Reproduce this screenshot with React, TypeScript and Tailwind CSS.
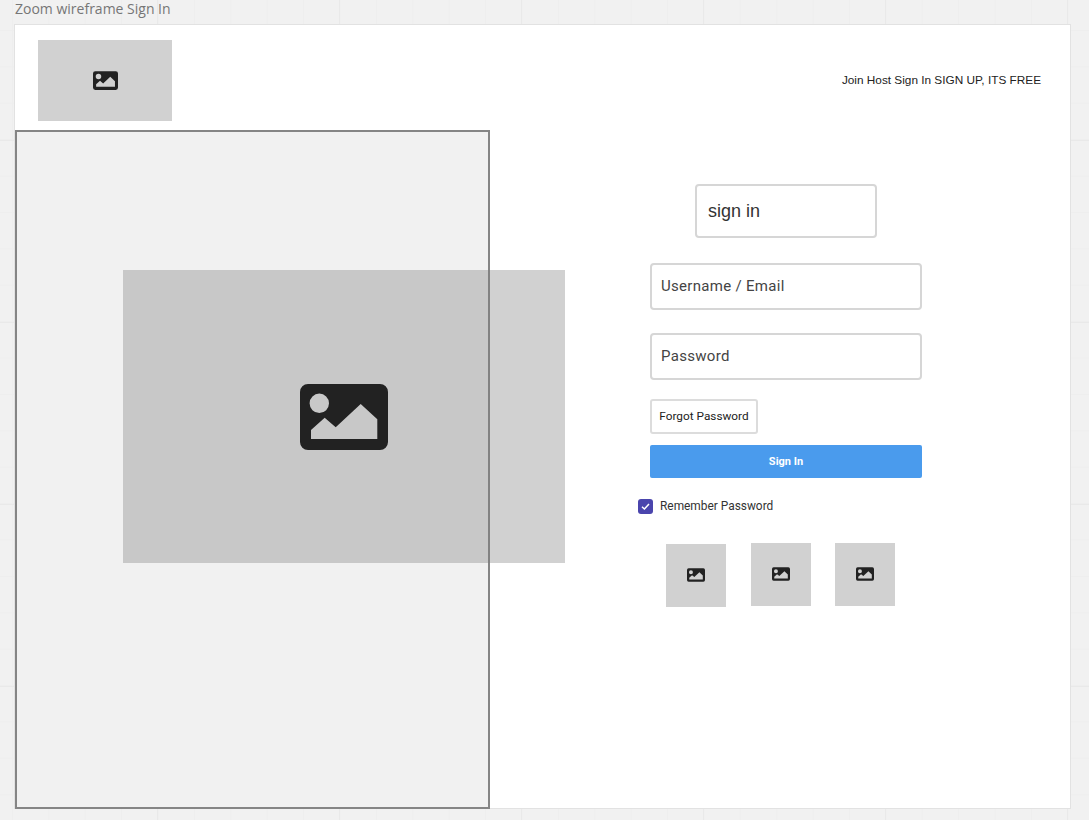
const roboto = "font-['Roboto','Liberation_Sans',sans-serif]";

// wireframe placeholder glyph
function ImageIcon({ className }: { className: string }) {
  return (
    <svg viewBox="0 0 88 66" className={className} aria-hidden="true">
      <path
        fill="#222222"
        fillRule="evenodd"
        d="M8 0H80A8 8 0 0 1 88 8V58A8 8 0 0 1 80 66H8A8 8 0 0 1 0 58V8A8 8 0 0 1 8 0ZM19.3 9.6A9.7 9.7 0 1 0 19.3 29A9.7 9.7 0 1 0 19.3 9.6ZM11 55H77.3V35.3L60.7 20L35.7 43.3L24.7 33.7L11 46Z"
      />
    </svg>
  );
}

function Thumb({ offset }: { offset: string }) {
  return (
    <div className={`flex h-[63px] w-[60px] items-center justify-center bg-[#d1d1d1] ${offset}`}>
      <ImageIcon className="h-[14px] w-[18px]" />
    </div>
  );
}

export default function App() {
  return (
    <div className="h-[820px] w-[1089px] overflow-hidden bg-[#f1f1f1] bg-[linear-gradient(#e9e9e9_1px,transparent_1px),linear-gradient(90deg,#e9e9e9_1px,transparent_1px),linear-gradient(#eeeeee_1px,transparent_1px),linear-gradient(90deg,#eeeeee_1px,transparent_1px)] bg-[size:182px_182px,182px_182px,36.4px_36.4px,36.4px_36.4px] bg-[position:157px_140px,157px_140px,12px_30px,12px_30px] pl-[14px]">
      <div className="h-[24px] pl-[1px] font-['Open_Sans',sans-serif] text-[14px] leading-[17px] text-[#767676]">
        Zoom wireframe Sign In
      </div>

      {/* Artboard */}
      <div className="relative h-[785px] w-[1057px] border border-[#e2e2e2] bg-white">
        <header className="flex h-[105px] items-start justify-between pl-[23px] pr-[29px] pt-[15px]">
          <div className="flex h-[81px] w-[134px] items-center justify-center bg-[#d1d1d1]">
            <ImageIcon className="h-[19px] w-[25px]" />
          </div>
          <nav className="mt-[33px] font-['Liberation_Sans',sans-serif] text-[11.8px] leading-[14px] text-[#222222]">
            Join Host Sign In SIGN UP, ITS FREE
          </nav>
        </header>

        <div className="flex h-[678px] items-stretch">
          <div className="h-[679px] w-[475px] border-2 border-[#858585] bg-[#f1f1f1]" />

          {/* Sign in form */}
          <div className="ml-[160px] flex w-[272px] flex-col items-center pt-[54px]">
            <div className="ml-[45px] flex h-[54px] w-[182px] items-center self-start rounded-[4px] border-2 border-[#d6d6d6] pl-[11px] font-['Liberation_Sans',sans-serif] text-[18px] text-[#333333]">
              sign in
            </div>
            <div className={`mt-[25px] flex h-[47px] w-full items-center rounded-[4px] border-2 border-[#d6d6d6] pl-[9px] text-[15px] tracking-[0.3px] text-[#444444] ${roboto}`}>
              Username / Email
            </div>
            <div className={`mt-[23px] flex h-[47px] w-full items-center rounded-[4px] border-2 border-[#d6d6d6] pl-[9px] text-[15px] tracking-[0.3px] text-[#444444] ${roboto}`}>
              Password
            </div>
            <div className={`mt-[19px] flex h-[35px] w-[108px] items-center justify-center self-start rounded-[3px] border-2 border-[#dcdcdc] text-[11.8px] text-[#222222] ${roboto}`}>
              Forgot Password
            </div>
            <button className={`mt-[11px] h-[33px] w-full rounded-[2px] bg-[#4a9bed] pt-[1px] text-[11px] font-bold text-white ${roboto}`}>
              Sign In
            </button>
            <label className={`mt-[20px] ml-[-12px] flex items-center gap-[7px] self-start text-[11.9px] text-[#333333] ${roboto}`}>
              <span className="flex h-[15px] w-[15px] items-center justify-center rounded-[3px] bg-[#4a45ad]">
                <svg viewBox="0 0 15 15" className="h-[15px] w-[15px]" aria-hidden="true">
                  <path d="M4 7.8L6.4 10L11 5" fill="none" stroke="#ffffff" strokeWidth="1.5" />
                </svg>
              </span>
              Remember Password
            </label>
            <div className="mt-[27px] flex gap-[24px] self-start pl-[16px]">
              <Thumb offset="mt-[1px]" />
              <Thumb offset="ml-[1px]" />
              <Thumb offset="" />
            </div>
          </div>
        </div>

        {/* Hero image sits over the panel edge */}
        <div className="absolute left-[108px] top-[245px] flex h-[293px] w-[442px] items-center justify-center bg-[#7e7e7e]/[0.357]">
          <ImageIcon className="h-[66px] w-[88px]" />
        </div>
      </div>
    </div>
  );
}
